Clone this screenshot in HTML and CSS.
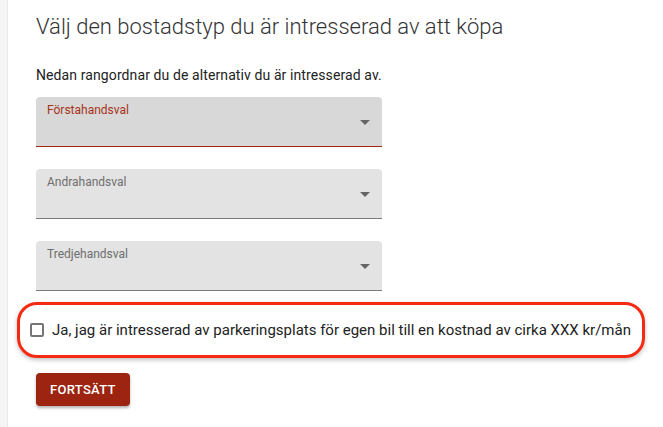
FILE: index.html
```html
<!DOCTYPE html>
<html lang="sv">
<head>
    <meta charset="UTF-8">
    <meta name="viewport" content="width=device-width, initial-scale=1.0">
    <title>Välj bostadstyp</title>
    <link rel="stylesheet" href="styles.css">
</head>
<body>
    <div class="page">
        <div class="side-strip"></div>
        <main class="content">
            <h1>Välj den bostadstyp du är intresserad av att köpa</h1>
            <p class="intro">Nedan rangordnar du de alternativ du är intresserad av.</p>

            <div class="select-field focused">
                <span class="select-label">Förstahandsval</span>
                <span class="select-arrow"></span>
            </div>
            <div class="select-field">
                <span class="select-label">Andrahandsval</span>
                <span class="select-arrow"></span>
            </div>
            <div class="select-field">
                <span class="select-label">Tredjehandsval</span>
                <span class="select-arrow"></span>
            </div>

            <div class="parking-box">
                <label class="parking-option">
                    <span class="checkbox"></span>
                    Ja, jag är intresserad av parkeringsplats för egen bil till en kostnad av cirka XXX kr/mån
                </label>
            </div>

            <button type="button" class="btn-continue">Fortsätt</button>
        </main>
    </div>
</body>
</html>
```

FILE: styles.css
```css
body {
    margin: 0;
    font-family: Roboto, "Liberation Sans", Arial, sans-serif;
    background-color: #fff;
    color: #212121;
}
.page {
    display: flex;
    min-height: 427px;
}
.side-strip {
    width: 7px;
    background-color: #f5f5f5;
    border-right: 1px solid #ebebeb;
    flex-shrink: 0;
}
.content {
    padding: 12px 0 0 28px;
    flex: 1;
}
h1 {
    font-size: 22px;
    font-weight: 300;
    color: #333;
    margin: 0 0 23px 0;
    line-height: 30px;
}
.intro {
    font-size: 14px;
    margin: 0 0 12px 0;
    line-height: 20px;
    color: #222;
    letter-spacing: 0.1px;
}
.select-field {
    position: relative;
    width: 346px;
    height: 49px;
    background-color: #e3e3e3;
    border-radius: 4px 4px 0 0;
    border-bottom: 1px solid #7a7a7a;
    margin-bottom: 22px;
}
.select-field.focused {
    background-color: #d8d8d8;
    border-bottom: 1px solid #a12a14;
}
.select-label {
    position: absolute;
    left: 11px;
    top: 6px;
    font-size: 12px;
    color: #6e6e6e;
}
.focused .select-label {
    color: #a63318;
}
.select-arrow {
    position: absolute;
    right: 12px;
    top: 23px;
    width: 0;
    height: 0;
    border-left: 5px solid transparent;
    border-right: 5px solid transparent;
    border-top: 5px solid #666;
}
.parking-box {
    margin: -11px 0 0 -19px;
    width: 622px;
    height: 50px;
    border: 3px solid #f42a12;
    border-radius: 20px;
    box-shadow: 0 2px 4px rgba(0, 0, 0, 0.25);
    display: flex;
    align-items: center;
}
.parking-option {
    display: flex;
    align-items: center;
    gap: 8px;
    padding-left: 10px;
    font-size: 15px;
    color: #222;
}
.checkbox {
    width: 10px;
    height: 10px;
    border: 2px solid #757575;
    border-radius: 2px;
}
.btn-continue {
    margin-top: 15px;
    background-color: #9c2410;
    color: #fff;
    border: none;
    border-radius: 4px;
    height: 33px;
    padding: 0 14px;
    font-family: Roboto, "Liberation Sans", Arial, sans-serif;
    font-size: 13px;
    font-weight: 500;
    letter-spacing: 0.3px;
    text-transform: uppercase;
    box-shadow: 0 2px 3px rgba(0, 0, 0, 0.3);
    cursor: pointer;
}
```
